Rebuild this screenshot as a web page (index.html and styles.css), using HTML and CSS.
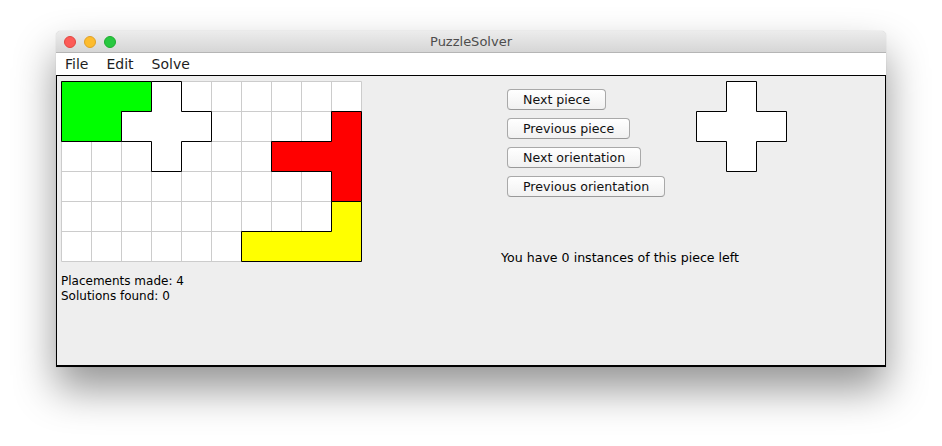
FILE: index.html
```html
<!DOCTYPE html>
<html>
<head>
<meta charset="utf-8">
<title>PuzzleSolver</title>
<link rel="stylesheet" href="styles.css">
</head>
<body>
<div class="window">
  <div class="titlebar">
    <div class="lights">
      <span class="light red"></span>
      <span class="light yellow"></span>
      <span class="light green"></span>
    </div>
    <div class="title">PuzzleSolver</div>
  </div>
  <div class="menubar">
    <span class="menu">File</span>
    <span class="menu">Edit</span>
    <span class="menu">Solve</span>
  </div>
  <div class="content">
    <div class="left">
      <svg class="board" width="302" height="182" viewBox="0 0 302 182">
        <rect x="0.5" y="0.5" width="300" height="180" fill="#ffffff"/>
        <g stroke="#cccccc" stroke-width="1" fill="none">
          <path d="M0.5 0.5V180.5M30.5 0.5V180.5M60.5 0.5V180.5M90.5 0.5V180.5M120.5 0.5V180.5M150.5 0.5V180.5M180.5 0.5V180.5M210.5 0.5V180.5M240.5 0.5V180.5M270.5 0.5V180.5M300.5 0.5V180.5"/>
          <path d="M0.5 0.5H300.5M0.5 30.5H300.5M0.5 60.5H300.5M0.5 90.5H300.5M0.5 120.5H300.5M0.5 150.5H300.5M0.5 180.5H300.5"/>
        </g>
        <g transform="translate(0.5 0.5)" stroke="#000000" stroke-width="1">
          <polygon fill="#00ff00" points="0,0 90,0 90,30 60,30 60,60 0,60"/>
          <polygon fill="#ffffff" points="90,0 120,0 120,30 150,30 150,60 120,60 120,90 90,90 90,60 60,60 60,30 90,30"/>
          <polygon fill="#ff0000" points="270,30 300,30 300,120 270,120 270,90 210,90 210,60 270,60"/>
          <polygon fill="#ffff00" points="270,120 300,120 300,180 180,180 180,150 270,150"/>
        </g>
      </svg>
      <div class="stats">
        <div>Placements made: 4</div>
        <div>Solutions found: 0</div>
      </div>
    </div>
    <div class="right">
      <div class="controls">
        <div class="buttons">
          <button class="btn">Next piece</button>
          <button class="btn">Previous piece</button>
          <button class="btn">Next orientation</button>
          <button class="btn">Previous orientation</button>
        </div>
        <svg class="preview" width="92" height="92" viewBox="0 0 92 92">
          <polygon transform="translate(0.5 0.5)" fill="#ffffff" stroke="#000000" stroke-width="1" points="30,0 60,0 60,30 90,30 90,60 60,60 60,90 30,90 30,60 0,60 0,30 30,30"/>
        </svg>
      </div>
      <div class="message">You have 0 instances of this piece left</div>
    </div>
  </div>
</div>
</body>
</html>
```

FILE: styles.css
```css
html, body {
  margin: 0;
  padding: 0;
  background: #ffffff;
}

body {
  width: 942px;
  height: 446px;
  overflow: hidden;
  font-family: "DejaVu Sans", sans-serif;
}

.window {
  margin: 31px 0 0 56px;
  width: 830px;
  border-radius: 5px 5px 0 0;
  box-shadow: 0 22px 42px rgba(0, 0, 0, 0.42), 0 0 1px rgba(0, 0, 0, 0.3);
  background: #eeeeee;
}

.titlebar {
  height: 21px;
  border-bottom: 1px solid #b5b5b5;
  border-radius: 5px 5px 0 0;
  background: linear-gradient(#ececec, #d6d6d6);
  display: flex;
  align-items: center;
  position: relative;
}

.lights {
  display: flex;
  gap: 8px;
  padding-left: 8px;
}

.light {
  width: 12px;
  height: 12px;
  border-radius: 50%;
  box-sizing: border-box;
}

.light.red { background: #fc5b57; border: 1px solid #e2463f; }
.light.yellow { background: #fdbc2e; border: 1px solid #e0a126; }
.light.green { background: #28c840; border: 1px solid #1ead2e; }

.title {
  position: absolute;
  left: 0;
  right: 0;
  top: 3px;
  text-align: center;
  font-size: 13px;
  color: #4d4d4d;
  line-height: 16px;
}

.menubar {
  height: 22px;
  background: #ffffff;
  display: flex;
  align-items: center;
  padding-left: 9px;
  font-size: 14px;
  color: #1e1e1e;
}

.menu {
  margin-right: 18px;
}

.content {
  height: 289px;
  border: 1px solid #000000;
  border-bottom-width: 2px;
  background: #eeeeee;
  display: flex;
  box-sizing: content-box;
}

.left {
  padding: 5px 0 0 4px;
  width: 440px;
}

.board {
  display: block;
}

.stats {
  margin-top: 11px;
  font-size: 12px;
  line-height: 15px;
  color: #000000;
}

.right {
  display: flex;
  flex-direction: column;
}

.controls {
  display: flex;
  padding-top: 5px;
}

.buttons {
  width: 189px;
  padding: 8px 0 0 6px;
  display: flex;
  flex-direction: column;
  align-items: flex-start;
  gap: 8px;
}

.btn {
  height: 21px;
  padding: 0 15px;
  font-family: "DejaVu Sans", sans-serif;
  font-size: 12.6px;
  color: #111111;
  background: linear-gradient(#ffffff, #f1f1f1);
  border: 1px solid #a9a9a9;
  border-bottom-color: #999999;
  border-radius: 4px;
  line-height: 19px;
}

.preview {
  display: block;
}

.message {
  margin-top: 53px;
  font-size: 12.6px;
  line-height: 15px;
  color: #000000;
}
```
